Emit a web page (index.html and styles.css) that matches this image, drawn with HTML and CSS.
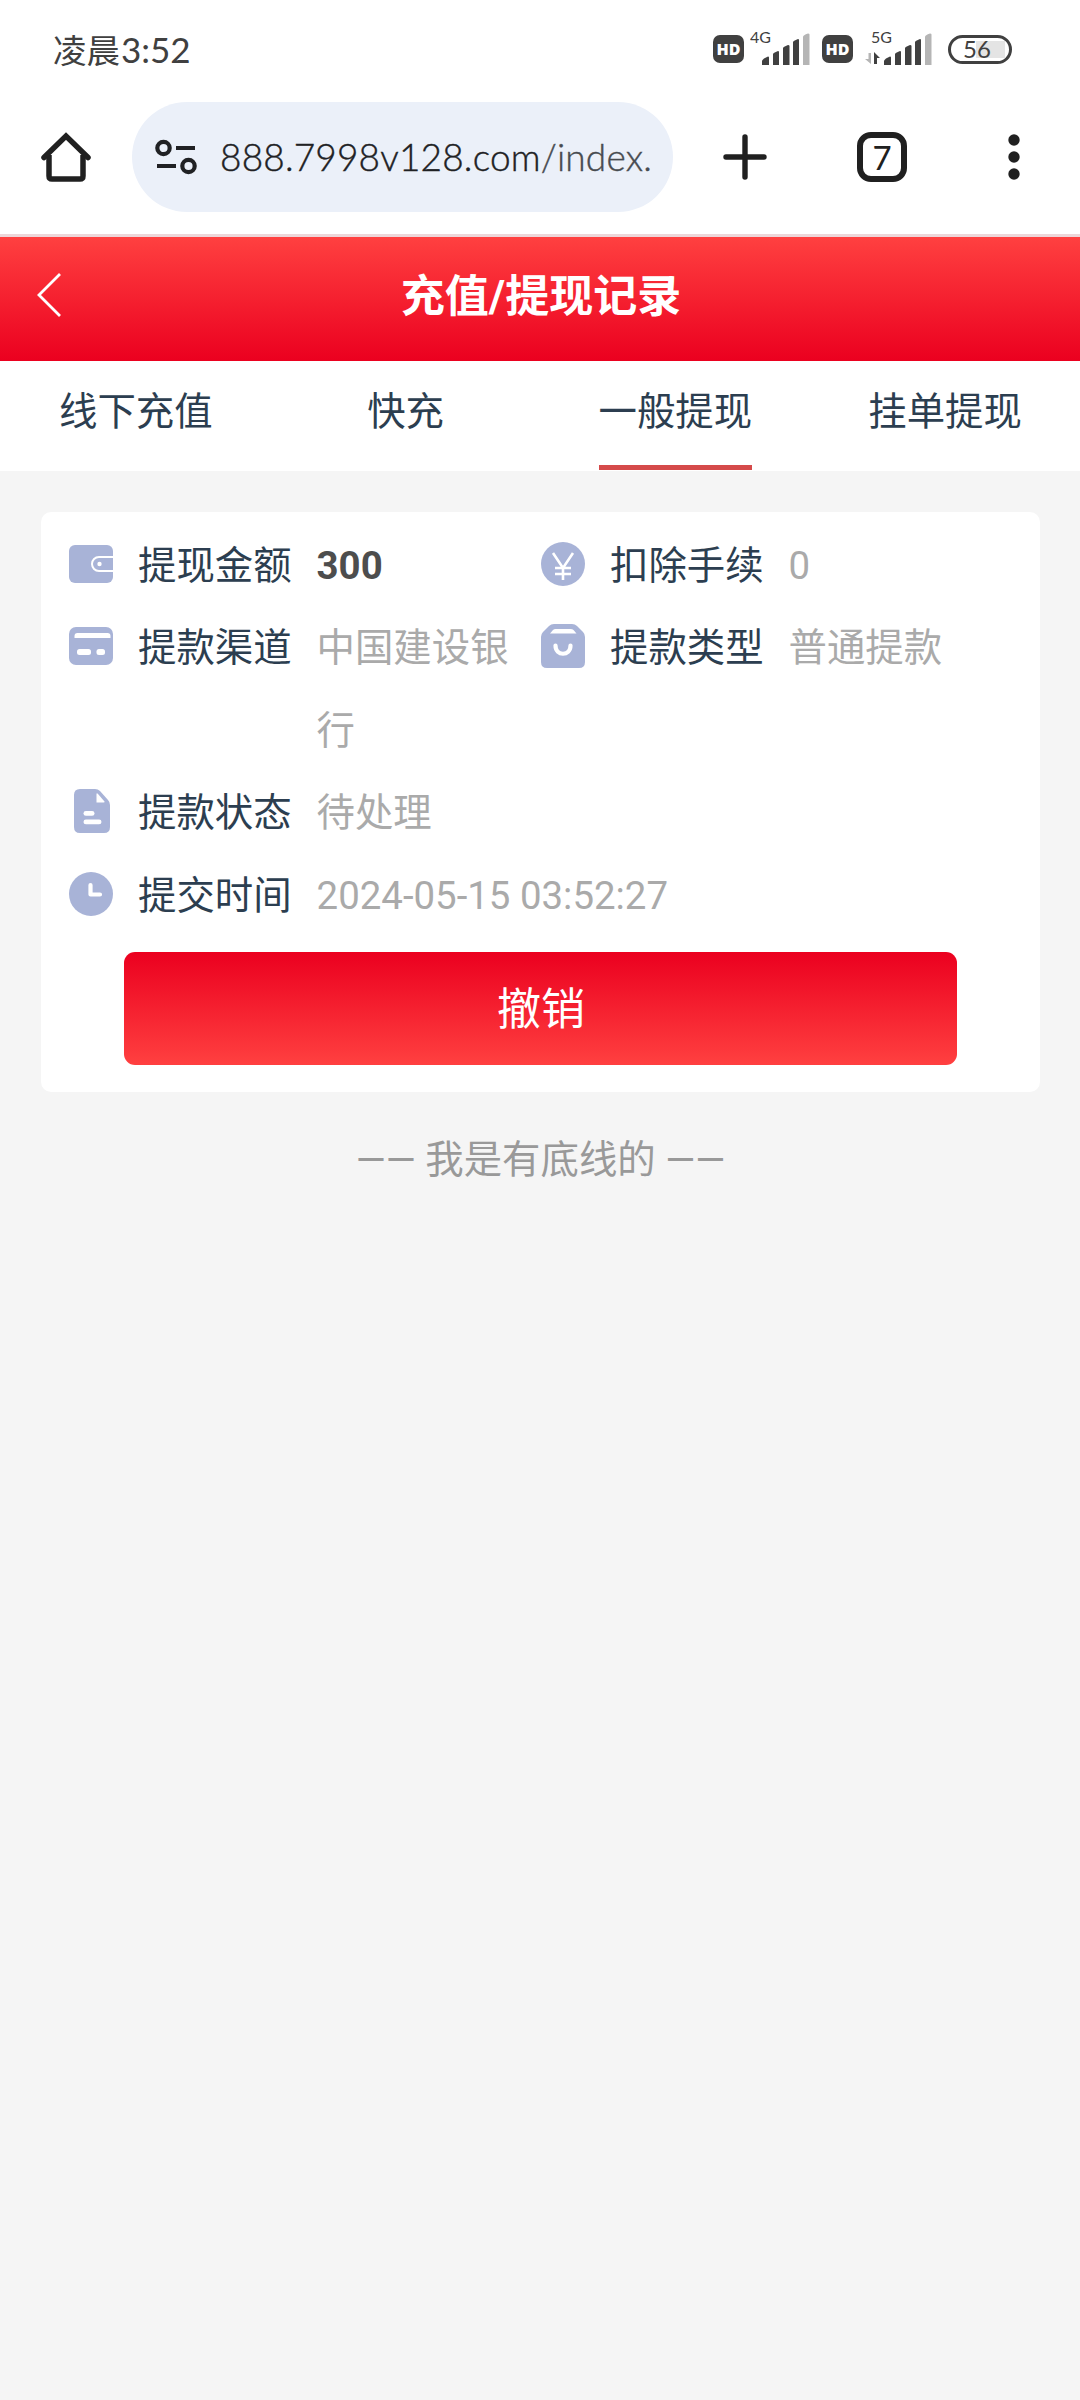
FILE: index.html
```html
<!DOCTYPE html>
<html lang="zh-CN">
<head>
<meta charset="utf-8">
<title>充值/提现记录</title>
<link rel="stylesheet" href="styles.css">
</head>
<body>
<div class="status-bar">
  <div class="clock">凌晨<span class="clock-digits">3:52</span></div>
  <div class="indicators">
    <span class="hd">HD</span>
    <svg class="signal" width="62" height="44" viewBox="0 -8 62 44">
      <text class="net" x="0" y="14">4G</text>
      <path class="on" d="M12 36v-4q0-1 2-2.500l4-2q1 0 1 1V36zM23 36V25q0-1 5-3q1 0 1 1v13zM33 36V19q0-1 5-3q1.500 0 1.500 1v19zM43 36V13q0-1 5-3q1 0 1 1v25z"/>
      <path class="off" d="M53 36V8q0-2 5-3.500q1.500 0 1.500 1V36z"/>
    </svg>
    <span class="hd hd-second">HD</span>
    <svg class="signal" width="70" height="44" viewBox="0 -8 70 44">
      <text class="net" x="7" y="14">5G</text>
      <path class="off" d="M4.500 24H7v11L1 30h3.500z"/>
      <path class="on" d="M10 35V23l6 6h-3v6z"/>
      <path class="on" d="M20 36v-4q0-1 2-2.500l4-2q1 0 1 1V36zM31 36V25q0-1 5-3q1 0 1 1v13zM41 36V19q0-1 5-3q1.500 0 1.500 1v19zM51 36V13q0-1 5-3q1 0 1 1v25z"/>
      <path class="off" d="M61 36V8q0-2 5-3.500q1.500 0 1.500 1V36z"/>
    </svg>
    <span class="battery">56</span>
  </div>
</div>

<div class="toolbar">
  <svg class="home" width="50" height="50" viewBox="0 0 50 50" fill="none" stroke="#202020" stroke-width="5.500">
    <path d="M8 23v21q0 3 3 3h28q3 0 3-3V23"/>
    <path d="M3 25.500L25 4l22 21.500" stroke-linecap="round"/>
  </svg>
  <div class="address">
    <svg class="tune" width="42" height="36" viewBox="0 0 42 36" fill="none" stroke="#202124" stroke-width="4.200">
      <circle cx="8.500" cy="9" r="6.200"/><path d="M21 9h19M2 27h19"/><circle cx="33.500" cy="27" r="6.200"/>
    </svg>
    <span class="url">888.7998v128.com<span class="path">/index.</span></span>
  </div>
  <svg class="plus" width="44" height="46" viewBox="0 0 44 46" stroke="#202020" stroke-width="5.400" stroke-linecap="round">
    <path d="M22 3v40M3 23h38"/>
  </svg>
  <span class="tab-count">7</span>
  <svg class="dots" width="12" height="46" viewBox="0 0 12 46" fill="#202020">
    <circle cx="6" cy="6" r="5.700"/><circle cx="6" cy="23" r="5.700"/><circle cx="6" cy="40" r="5.700"/>
  </svg>
</div>

<header class="page-header">
  <svg class="back" width="26" height="46" viewBox="0 0 26 46" fill="none" stroke="#fff" stroke-width="2.800">
    <path d="M24 2L3 23l21 21"/>
  </svg>
  <h1 class="title">充值/提现记录</h1>
</header>

<nav class="tabs">
  <a class="tab"><span class="tab-label">线下充值</span></a>
  <a class="tab"><span class="tab-label">快充</span></a>
  <a class="tab"><span class="tab-label active">一般提现</span></a>
  <a class="tab"><span class="tab-label">挂单提现</span></a>
</nav>

<main class="card">
  <div class="fields">
    <div class="field">
      <svg class="icon" viewBox="0 0 44 44"><rect y="3" width="44" height="38" rx="6"/>
        <path class="line" d="M44 15H30a7 7 0 0 0 0 14h14"/><circle class="cut" cx="30.500" cy="22" r="2.200"/></svg>
      <span class="label">提现金额</span><span class="value amount">300</span>
    </div>
    <div class="field">
      <svg class="icon" viewBox="0 0 44 44"><circle cx="22" cy="22" r="22"/>
        <path class="line yen" d="M12 11l10 15 10-15M22 25v13M14 26h16M14 32h16"/></svg>
      <span class="label">扣除手续</span><span class="value">0</span>
    </div>
    <div class="field">
      <svg class="icon" viewBox="0 0 44 44"><rect y="3" width="44" height="38" rx="7"/>
        <path class="cut" d="M5.500 14v-2q0-3 3-3h30q3 0 3 3v2z"/>
        <rect class="cut" x="8" y="25" width="14" height="6" rx="2.500"/><rect class="cut" x="27.500" y="25" width="8.500" height="6" rx="2.500"/></svg>
      <span class="label">提款渠道</span><span class="value">中国建设银行</span>
    </div>
    <div class="field">
      <svg class="icon" viewBox="0 0 44 44"><path d="M13 0h18q3 0 5 2l6 6q2 2 2 5v25q0 6-6 6H6q-6 0-6-6V13q0-3 2-5l6-6q2-2 5-2z"/>
        <path class="cut" d="M14.500 5h15q2 0 3 1l3 3.500H9l3-3.500q1-1 2.500-1z"/>
        <path class="line smile" d="M14.500 21.500c0 11 15 11 15 0"/></svg>
      <span class="label">提款类型</span><span class="value">普通提款</span>
    </div>
    <div class="field wide">
      <svg class="icon" viewBox="0 0 44 44"><path d="M11 0h15q3 0 5 2l8 9q2 2 2 5v22q0 6-6 6H11q-6 0-6-6V6q0-6 6-6z"/>
        <path class="cut" d="M27.500 5.500q0-2 1.500-.5l6.500 7.500q.5 1-1 1h-7z"/>
        <rect class="cut" x="14.500" y="22" width="11" height="4.800" rx="2.400"/><rect class="cut" x="14.500" y="30.500" width="18" height="4.800" rx="2.400"/></svg>
      <span class="label">提款状态</span><span class="value">待处理</span>
    </div>
    <div class="field wide">
      <svg class="icon" viewBox="0 0 44 44"><circle cx="22" cy="22" r="22"/>
        <path class="line hands" d="M21.500 13v9.500h9.500"/></svg>
      <span class="label">提交时间</span><span class="value">2024-05-15 03:52:27</span>
    </div>
  </div>
  <button class="cancel">撤销</button>
</main>
<footer class="end-note">—— 我是有底线的 ——</footer>
</body>
</html>
```
FILE: styles.css
```css
* { box-sizing: border-box; }
body {
  margin: 0;
  min-height: 2400px;
  background: #f5f5f5;
  font-family: Roboto, "Noto Sans CJK SC", sans-serif;
  font-size: 38.4px;
  color: #2c3e50;
}
svg { display: block; flex: none; }

.status-bar {
  display: flex;
  justify-content: space-between;
  height: 102px;
  padding: 0 68px 0 53px;
  background: #fff;
  color: #404040;
}
.clock {
  height: 98px;
  font: 33.5px/98px Lato, "Noto Sans CJK SC", sans-serif;
}
.clock-digits { margin-left: 1px; font-size: 35px; }
.indicators { display: flex; align-items: flex-start; padding-top: 21px; }
.hd {
  width: 31px;
  height: 28px;
  margin: 14px 6px 0 0;
  border-radius: 7px;
  background: #404040;
  color: #fff;
  font: 800 16px/29px "Open Sans", sans-serif;
  text-align: center;
}
.hd-second { margin: 14px 11px 0 10px; }
.net { font: 400 16px Lato, sans-serif; fill: #404040; }
.on { fill: #404040; }
.off { fill: #b5b5b5; }
.battery {
  width: 64px;
  height: 29px;
  margin: 14px 0 0 14px;
  padding-right: 6px;
  border: 3px solid #404040;
  border-radius: 15px;
  background: linear-gradient(#e4e4e4, #e4e4e4) 25px 3px / 29px 17px no-repeat;
  font: 24px/22px Lato, sans-serif;
  text-align: center;
}

.toolbar {
  display: flex;
  align-items: center;
  height: 135px;
  padding: 0 60px 22px 41px;
  border-bottom: 3px solid #edd6d9;
  background: #fff;
}
.address {
  display: flex;
  align-items: center;
  width: 541px;
  height: 110px;
  margin: 0 50px 0 41px;
  padding-left: 23px;
  border-radius: 55px;
  background: #ebf0f9;
}
.url {
  margin-left: 23px;
  font: 300 37px/110px Lato, sans-serif;
  letter-spacing: .17px;
  color: #202124;
  -webkit-text-stroke: .4px;
  white-space: nowrap;
}
.path { color: #474b50; }
.tab-count {
  width: 50px;
  height: 50px;
  margin: 0 101px 0 90px;
  border: 6px solid #202020;
  border-radius: 14px;
  color: #202020;
  font: 33px/39px Lato, sans-serif;
  text-align: center;
}

.page-header {
  display: grid;
  grid-template-columns: 100px 1fr 100px;
  align-items: center;
  height: 124px;
  padding-bottom: 8px;
  background: linear-gradient(#ff4040, #eb001f);
}
.back { margin-left: 36px; }
.title {
  margin: 0;
  padding: 3px 0 0 2px;
  color: #fff;
  font-size: 44px;
  line-height: 60px;
  text-align: center;
}

.tabs { display: grid; grid-template-columns: repeat(4, 1fr); height: 110px; padding-left: 1px; background: #fff; }
.tab { display: flex; justify-content: center; }
.tab-label { height: 109px; line-height: 101px; }
.active { border-bottom: 5px solid #d54a4a; }

.card {
  width: 999px;
  height: 580px;
  margin: 41px auto 0 41px;
  padding: 13px 28px 0;
  border-radius: 10px;
  background: #fff;
}
.fields { display: grid; grid-template-columns: 472px 1fr; line-height: 82.4px; }
.field { display: flex; align-items: flex-start; }
.wide { grid-column: span 2; }
.icon { width: 44px; height: 44px; margin-top: 17px; fill: #a8b3d7; }
.cut { fill: #fff; }
.line { fill: none; stroke: #fff; stroke-width: 2; }
.yen { stroke-width: 2.600; }
.smile, .hands { stroke-width: 4.200; stroke-linecap: round; stroke-linejoin: round; }
.label { margin-left: 25px; flex: none; }
.value { width: 194px; margin-left: 25px; color: #aaa; }
.wide .value { width: auto; }
.amount { color: #4d4d4d; font-weight: 700; }
.cancel {
  display: block;
  width: 833px;
  height: 113px;
  margin: 15px 0 0 55px;
  padding: 4px 0 0 1px;
  border: 0;
  border-radius: 11px;
  background: linear-gradient(#eb001f, #ff4040);
  color: #fff;
  font: 44px/109px Roboto, "Noto Sans CJK SC", sans-serif;
}
.end-note { padding: 1px 0 0 1px; margin-top: 27px; color: #999; line-height: 80px; text-align: center; }
```
